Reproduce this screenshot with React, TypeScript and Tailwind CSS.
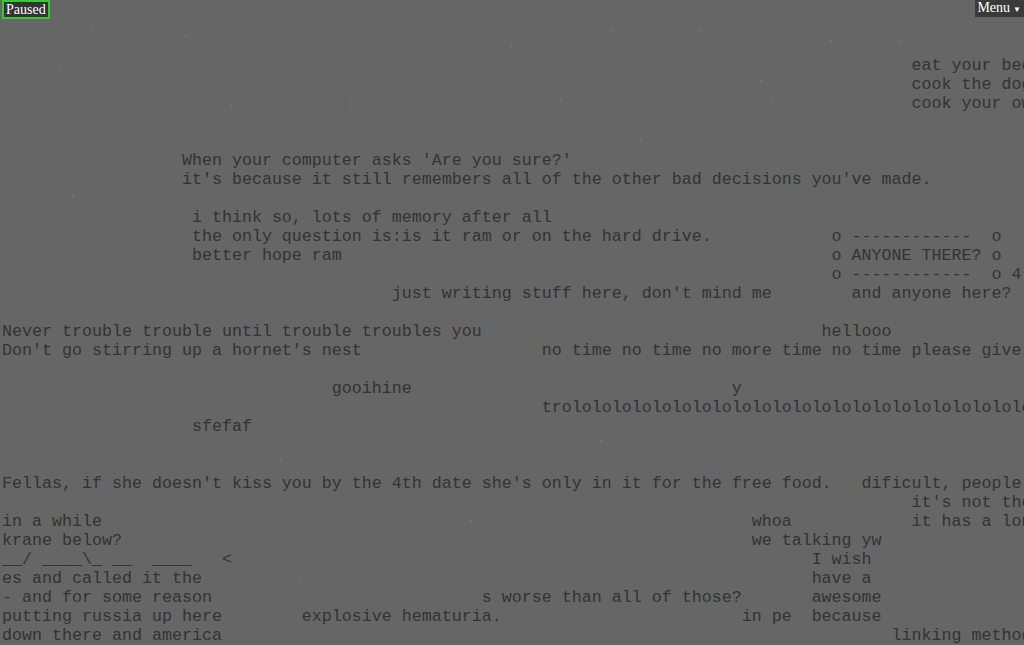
import React from 'react';

// each row of the world: [column, text] pairs, columns are 10px cells
type Seg = [number, string];

const rows: Seg[][] = [
  [], // row 1
  [], // row 2
  [[91, 'eat your beef']],
  [[91, 'cook the dog']],
  [[91, 'cook your own']],
  [],
  [],
  [[18, "When your computer asks 'Are you sure?'"]],
  [[18, "it's because it still remembers all of the other bad decisions you've made."]],
  [],
  [[19, 'i think so, lots of memory after all']],
  [[19, 'the only question is:is it ram or on the hard drive.'], [83, 'o ------------  o']],
  [[19, 'better hope ram'], [83, 'o ANYONE THERE? o']],
  [[83, 'o ------------  o 4']],
  [[39, "just writing stuff here, don't mind me"], [85, 'and anyone here?']],
  [],
  [[0, 'Never trouble trouble until trouble troubles you'], [82, 'hellooo']],
  [[0, "Don't go stirring up a hornet's nest"], [54, 'no time no time no more time no time please give']],
  [],
  [[33, 'gooihine'], [73, 'y']],
  [[54, 'trololololololololololololololololololololololololol']],
  [[19, 'sfefaf']],
  [],
  [],
  [[0, "Fellas, if she doesn't kiss you by the 4th date she's only in it for the free food."], [86, 'dificult, people']],
  [[91, "it's not the"]],
  [[0, 'in a while'], [75, 'whoa'], [91, 'it has a long']],
  [[0, 'krane below?'], [75, 'we talking yw']],
  [[0, '__/ ____\\_ __  ____   <'], [81, 'I wish']],
  [[0, 'es and called it the'], [81, 'have a']],
  [[0, '- and for some reason'], [48, 's worse than all of those?'], [81, 'awesome']],
  [[0, 'putting russia up here'], [30, 'explosive hematuria.'], [74, 'in pe'], [81, 'because']],
  [[0, 'down there and america'], [89, 'linking method']],
];

const buildLine = (segs: Seg[]) => {
  let line = '';
  for (const [col, text] of segs) {
    if (line.length < col) line += ' '.repeat(col - line.length);
    line += text;
  }
  return line;
};

// stray cursor specks left by other visitors
const specks: [number, number][] = [
  [90, 26], [185, 35], [58, 66], [230, 105], [295, 70], [350, 103], [510, 45],
  [560, 100], [610, 30], [700, 30], [760, 80], [770, 100], [830, 40], [900, 40],
  [72, 195], [640, 140], [280, 460], [470, 520], [600, 440], [300, 580],
];

const App: React.FC = () => {
  return (
    <div className="relative w-full h-[645px] overflow-hidden bg-[#666666] text-[#333333]">
      {specks.map(([x, y], i) => (
        <span
          key={i}
          className="absolute w-[2px] h-[2px] bg-[#727272]"
          style={{ left: x, top: y }}
        />
      ))}

      <div className="pt-[18px] pl-[2px] font-['Liberation_Mono',monospace] text-[16.67px] leading-[19px]">
        {rows.map((segs, i) => (
          <div key={i} className="h-[19px] whitespace-pre">
            {buildLine(segs)}
          </div>
        ))}
      </div>

      <div className="absolute top-0 left-[2px] h-[19px] px-[2px] bg-[#333333] border-2 border-[#33cc33] text-white font-['Liberation_Serif',serif] text-[14px] leading-[15px]">
        Paused
      </div>

      <div className="absolute top-0 right-0 h-[17px] pl-[2px] pr-[3px] bg-[#3a3a3a] text-white font-['Liberation_Serif',serif] text-[14px] leading-[16px] flex items-start gap-[3px]">
        <span>Menu</span>
        <span className="text-[8px] leading-[20px]">▼</span>
      </div>
    </div>
  );
};

export default App;
